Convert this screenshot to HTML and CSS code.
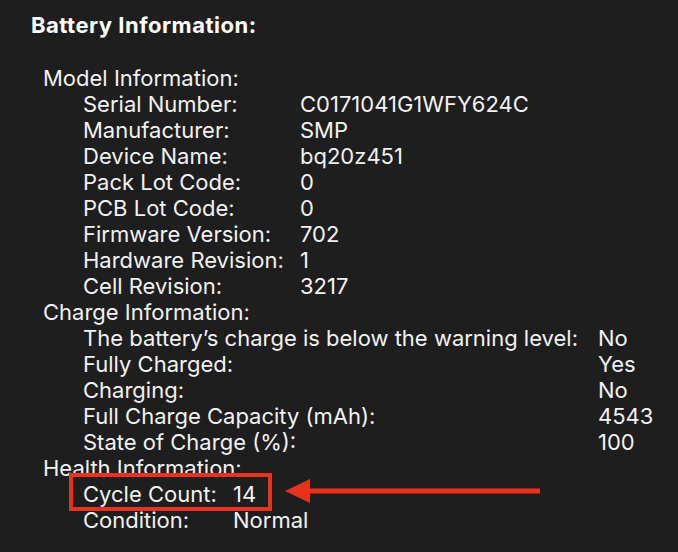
FILE: index.html
```html
<!DOCTYPE html>
<html>
<head>
<meta charset="utf-8">
<link rel="stylesheet" href="styles.css">
</head>
<body>
<div class="page">
  <h1 class="title">Battery Information:</h1>
  <div class="section">
    <div class="head">Model Information:</div>
    <div class="group model">
      <div class="row"><span class="k">Serial Number:</span><span class="v">C0171041G1WFY624C</span></div>
      <div class="row"><span class="k">Manufacturer:</span><span class="v">SMP</span></div>
      <div class="row"><span class="k">Device Name:</span><span class="v">bq20z451</span></div>
      <div class="row"><span class="k">Pack Lot Code:</span><span class="v">0</span></div>
      <div class="row"><span class="k">PCB Lot Code:</span><span class="v">0</span></div>
      <div class="row"><span class="k">Firmware Version:</span><span class="v">702</span></div>
      <div class="row"><span class="k">Hardware Revision:</span><span class="v">1</span></div>
      <div class="row"><span class="k">Cell Revision:</span><span class="v">3217</span></div>
    </div>
    <div class="head">Charge Information:</div>
    <div class="group charge">
      <div class="row"><span class="k">The battery’s charge is below the warning level:</span><span class="v">No</span></div>
      <div class="row"><span class="k">Fully Charged:</span><span class="v">Yes</span></div>
      <div class="row"><span class="k">Charging:</span><span class="v">No</span></div>
      <div class="row"><span class="k">Full Charge Capacity (mAh):</span><span class="v">4543</span></div>
      <div class="row"><span class="k">State of Charge (%):</span><span class="v">100</span></div>
    </div>
    <div class="head">Health Information:</div>
    <div class="group health">
      <div class="row"><span class="k">Cycle Count:</span><span class="v">14</span></div>
      <div class="row"><span class="k">Condition:</span><span class="v">Normal</span></div>
    </div>
  </div>
  <svg class="annot" width="678" height="552" viewBox="0 0 678 552">
    <rect x="71" y="475" width="199" height="34" fill="none" stroke="#e8321c" stroke-width="4"/>
    <line x1="305" y1="491" x2="540" y2="491" stroke="#e8321c" stroke-width="5"/>
    <polygon points="285,491 310,479 310,503" fill="#e8321c"/>
  </svg>
</div>
</body>
</html>
```
FILE: styles.css
```css
html, body {
  margin: 0;
  padding: 0;
  background: #1e1e1e;
}
.page {
  position: relative;
  width: 678px;
  height: 552px;
  overflow: hidden;
  background: #1e1e1e;
  color: #f2f2f2;
  font-family: Inter, "Helvetica Neue", Arial, sans-serif;
  font-size: 22px;
  line-height: 26px;
}
.title {
  margin: 0;
  padding: 12px 0 0 31px;
  font-size: 22px;
  font-weight: 700;
  letter-spacing: 0.5px;
  line-height: 26px;
  color: #ffffff;
}
.section {
  padding: 27px 0 0 43px;
}
.group {
  padding-left: 40px;
}
.row {
  display: flex;
  white-space: nowrap;
}
.model .k { width: 217px; }
.charge .k { width: 515px; }
.health .k { width: 150px; }
.annot {
  position: absolute;
  left: 0;
  top: 0;
}
```
